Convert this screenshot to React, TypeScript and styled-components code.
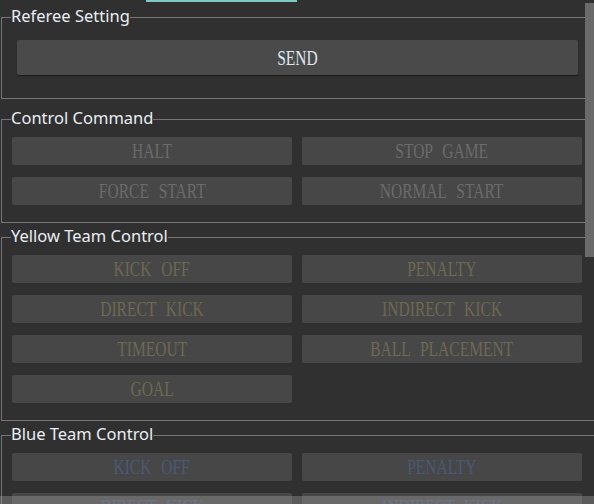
import React from "react";
import styled, { createGlobalStyle } from "styled-components";

const GlobalStyle = createGlobalStyle`
  html, body {
    margin: 0;
    padding: 0;
    background: #303030;
    overflow: hidden;
  }
`;

const Viewport = styled.div`
  position: relative;
  width: 594px;
  height: 504px;
  overflow: hidden;
  background: #303030;
  font-family: "Noto Sans", "Open Sans", sans-serif;
`;

const TabIndicator = styled.div`
  margin-left: 146px;
  width: 151px;
  height: 2px;
  background: #7fcabf;
`;

const Column = styled.div`
  display: flex;
  flex-direction: column;
  padding-left: 1px;
`;

const GroupBox = styled.section<{ $top: number; $bottom: number }>`
  display: flex;
  flex-direction: column;
  align-items: flex-start;
  margin-top: ${(p) => p.$top}px;
  padding-bottom: ${(p) => p.$bottom}px;
  border: 1px solid #767676;
  border-right: none;
`;

const GroupTitle = styled.h2`
  margin: -13px 0 0 9px;
  padding: 0;
  font-family: "Noto Sans", "Open Sans", sans-serif;
  font-weight: 400;
  font-size: 16.5px;
  line-height: 22px;
  color: #e9eef3;
  background: #303030;
  white-space: nowrap;
`;

const SendButton = styled.button`
  display: flex;
  align-items: center;
  justify-content: center;
  margin: 13px 0 0 15px;
  width: 561px;
  height: 35px;
  padding: 0;
  border: none;
  border-radius: 2px;
  background: #4a4a4a;
  box-shadow: 0 1px 1px rgba(0, 0, 0, 0.45);
  color: #dfe6ee;
  cursor: pointer;
`;

const ButtonGrid = styled.div`
  display: grid;
  grid-template-columns: 280px 280px;
  grid-auto-rows: 28px;
  column-gap: 10px;
  row-gap: 12px;
  margin: 8px 0 0 10px;
`;

type Tone = "grey" | "yellow" | "blue";

const toneColor: Record<Tone, string> = {
  grey: "#6b6b6b",
  yellow: "#6e6952",
  blue: "#4b5977",
};

const CmdButton = styled.button<{ $tone: Tone }>`
  display: flex;
  align-items: center;
  justify-content: center;
  padding: 0;
  border: none;
  border-radius: 2px;
  background: #474747;
  color: ${(p) => toneColor[p.$tone]};
`;

const Label = styled.span`
  display: inline-block;
  font-family: "Liberation Serif", "Times New Roman", serif;
  font-size: 21px;
  line-height: 24px;
  word-spacing: 8px;
  white-space: nowrap;
  transform: scaleX(0.74);
`;

const ScrollHandle = styled.div`
  position: absolute;
  top: 3px;
  right: 0;
  width: 9px;
  height: 254px;
  background: #6a6a6a;
`;

const HScrollOverlay = styled.div`
  position: absolute;
  left: 0;
  right: 0;
  bottom: 0;
  height: 8px;
  background: rgba(162, 162, 162, 0.375);
`;

const control = ["HALT", "STOP GAME", "FORCE START", "NORMAL START"];
const team = [
  "KICK OFF",
  "PENALTY",
  "DIRECT KICK",
  "INDIRECT KICK",
  "TIMEOUT",
  "BALL PLACEMENT",
  "GOAL",
];

function Buttons({ items, tone }: { items: string[]; tone: Tone }) {
  return (
    <ButtonGrid>
      {items.map((t) => (
        <CmdButton key={t} $tone={tone} disabled>
          <Label>{t}</Label>
        </CmdButton>
      ))}
    </ButtonGrid>
  );
}

export default function App() {
  return (
    <Viewport>
      <GlobalStyle />
      <TabIndicator />
      <Column>
        <GroupBox $top={15} $bottom={23}>
          <GroupTitle>Referee Setting</GroupTitle>
          <SendButton>
            <Label>SEND</Label>
          </SendButton>
        </GroupBox>
        <GroupBox $top={20} $bottom={17}>
          <GroupTitle>Control Command</GroupTitle>
          <Buttons items={control} tone="grey" />
        </GroupBox>
        <GroupBox $top={14} $bottom={17}>
          <GroupTitle>Yellow Team Control</GroupTitle>
          <Buttons items={team} tone="yellow" />
        </GroupBox>
        <GroupBox $top={14} $bottom={17}>
          <GroupTitle>Blue Team Control</GroupTitle>
          <Buttons items={team} tone="blue" />
        </GroupBox>
      </Column>
      <ScrollHandle />
      <HScrollOverlay />
    </Viewport>
  );
}
